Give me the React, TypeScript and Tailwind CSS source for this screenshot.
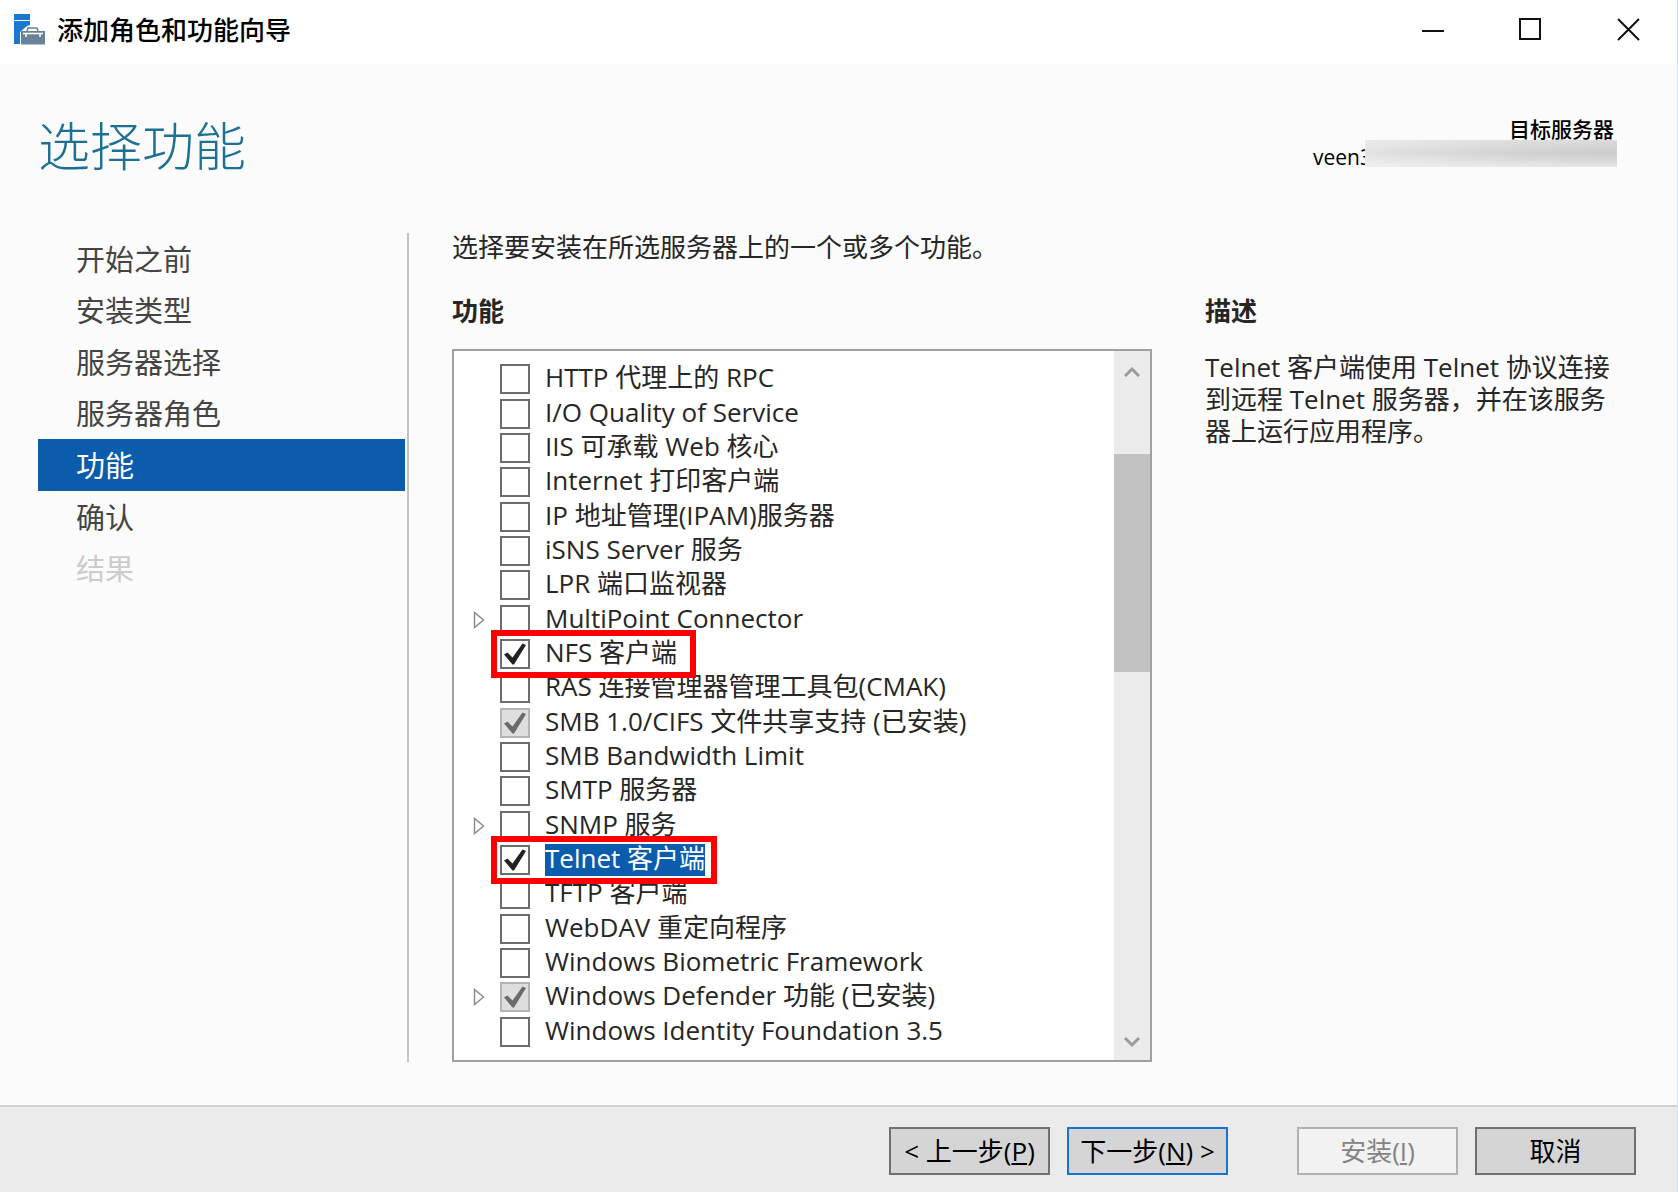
import { useState } from 'react';
import { clsx } from 'clsx';

// ── Data ──────────────────────────────────────────────────────────────────────

type Feature = {
  name: string;
  expandable?: boolean;
  installed?: boolean;
  mark?: string;
};

const STEPS: { label: string; disabled?: boolean }[] = [
  { label: '开始之前' },
  { label: '安装类型' },
  { label: '服务器选择' },
  { label: '服务器角色' },
  { label: '功能' },
  { label: '确认' },
  { label: '结果', disabled: true },
];

const FEATURES: Feature[] = [
  { name: 'HTTP 代理上的 RPC' },
  { name: 'I/O Quality of Service' },
  { name: 'IIS 可承载 Web 核心' },
  { name: 'Internet 打印客户端' },
  { name: 'IP 地址管理(IPAM)服务器' },
  { name: 'iSNS Server 服务' },
  { name: 'LPR 端口监视器' },
  { name: 'MultiPoint Connector', expandable: true },
  { name: 'NFS 客户端', mark: 'w-[205px]' },
  { name: 'RAS 连接管理器管理工具包(CMAK)' },
  { name: 'SMB 1.0/CIFS 文件共享支持 (已安装)', installed: true },
  { name: 'SMB Bandwidth Limit' },
  { name: 'SMTP 服务器' },
  { name: 'SNMP 服务', expandable: true },
  { name: 'Telnet 客户端', mark: 'w-[226px]' },
  { name: 'TFTP 客户端' },
  { name: 'WebDAV 重定向程序' },
  { name: 'Windows Biometric Framework' },
  { name: 'Windows Defender 功能 (已安装)', expandable: true, installed: true },
  { name: 'Windows Identity Foundation 3.5' },
];

// ── Main ──────────────────────────────────────────────────────────────────────

export default function App() {
  const [step, setStep]       = useState('功能');
  const [active, setActive]   = useState('Telnet 客户端');
  const [checked, setChecked] = useState<string[]>(['NFS 客户端', 'Telnet 客户端']);

  const toggle = (name: string) => {
    setActive(name);
    setChecked(list => (list.includes(name) ? list.filter(n => n !== name) : [...list, name]));
  };

  return (
    <div
      lang="zh-CN"
      className="flex min-h-screen flex-col border-r border-[#cfe2ef] bg-[#fbfbfb] font-['Open_Sans','Noto_Sans_CJK_SC',sans-serif] text-[26px] leading-8 text-[#262626]"
    >
      <TitleBar />

      {/* ── Header ── */}
      <header className="flex items-start justify-between pt-10 pr-[60px] pl-[38px]">
        <h1 className="pt-[7px] text-[52px] leading-[70px] font-light text-[#1b7093]">选择功能</h1>
        <div className="relative w-[304px] pt-[11px] text-[21px] leading-7 text-black">
          <p className="pr-[3px] text-right font-medium">目标服务器</p>
          <p>veen3</p>
          <div className="absolute top-9 right-0 h-[27px] w-[252px] bg-linear-to-r from-[#e2e2e2] via-[#d0d0d0] via-65% to-[#cccccc]">
            <div className="h-full w-full bg-linear-to-b from-white/30 via-transparent to-white/50" />
          </div>
        </div>
      </header>

      {/* ── Body ── */}
      <main className="flex flex-1 pt-[52px] pr-[59px] pb-[43px] pl-[38px]">
        <nav className="w-[371px] shrink-0 border-r-2 border-[#c3c3c3] pr-[2px]">
          <ul className="grid h-[361px] auto-rows-fr text-[29px]">
            {STEPS.map(s => (
              <li key={s.label} className="flex">
                <button
                  disabled={s.disabled}
                  onClick={() => setStep(s.label)}
                  className={clsx(
                    'w-full pt-[2px] pl-[38px] text-left',
                    s.disabled ? 'text-[#cccccc]' : step === s.label ? 'bg-[#0b5cad] text-white' : 'text-[#444444]',
                  )}
                >
                  {s.label}
                </button>
              </li>
            ))}
          </ul>
        </nav>

        <section className="flex min-w-0 flex-1 flex-col pl-[43px]">
          <p className="-mt-[2px]">选择要安装在所选服务器上的一个或多个功能。</p>
          <h2 className="mt-8 font-bold">功能</h2>
          <div className="mt-[22px] flex flex-1 border-2 border-[#a0a0a0] bg-white">
            <ul className="grid h-[687px] flex-1 auto-rows-fr self-center pl-[19px]">
              {FEATURES.map(f => (
                <FeatureRow
                  key={f.name}
                  feature={f}
                  active={active === f.name}
                  checked={!!f.installed || checked.includes(f.name)}
                  onToggle={() => toggle(f.name)}
                />
              ))}
            </ul>
            <ScrollBar />
          </div>
        </section>

        <aside className="ml-[53px] w-[413px] shrink-0 pt-[62px]">
          <h2 className="font-bold">描述</h2>
          <p className="mt-6">Telnet 客户端使用 Telnet 协议连接到远程 Telnet 服务器，并在该服务器上运行应用程序。</p>
        </aside>
      </main>

      {/* ── Footer ── */}
      <footer className="flex justify-end border-t-2 border-[#d2d2d2] bg-[#ebebeb] pt-5 pr-[41px] pb-[17px] text-black">
        <button className="h-12 w-[161px] border-2 border-[#707070] bg-[#d5d5d5]">&lt; 上一步(<u>P</u>)</button>
        <button className="ml-[17px] h-12 w-[161px] border-2 border-[#1874d2] bg-[#d5d5d5]">下一步(<u>N</u>) &gt;</button>
        <button disabled className="ml-[69px] h-12 w-[161px] border-2 border-[#adb2b5] bg-[#f2f2f2] text-[#838383]">安装(<u>I</u>)</button>
        <button className="ml-[17px] h-12 w-[161px] border-2 border-[#707070] bg-[#d5d5d5]">取消</button>
      </footer>
    </div>
  );
}

// ── Title bar ─────────────────────────────────────────────────────────────────

function TitleBar() {
  return (
    <div className="flex h-16 items-center bg-white pb-1 text-black">
      <svg viewBox="0 0 32 32" className="ml-[14px] h-8 w-8">
        <path d="M0 0h16v6H0zM0 7h16v4l-3 1-7 6v12H0z" fill="#1b78d2" />
        <path d="M13 17l1-3h9l1 3" fill="none" stroke="#67839a" strokeWidth="1.5" />
        <path d="M7 17h24v13.5H7z" fill="#67839a" />
        <path d="M9 19.5h20M12 19v4M26 19v4" fill="none" stroke="#fff" strokeWidth="1.5" />
      </svg>
      <span className="ml-[11px] flex-1 font-medium">添加角色和功能向导</span>
      <button aria-label="最小化" className="flex h-full w-[98px] items-center justify-center">
        <svg viewBox="0 0 24 24" className="h-6 w-6" fill="none" stroke="#111" strokeWidth="2">
          <path d="M2 13h22" />
        </svg>
      </button>
      <button aria-label="最大化" className="flex h-full w-[98px] items-center justify-center">
        <svg viewBox="0 0 24 24" className="h-6 w-6" fill="none" stroke="#111" strokeWidth="2">
          <path d="M2 1h20v20H2z" />
        </svg>
      </button>
      <button aria-label="关闭" className="flex h-full w-[98px] items-center justify-center">
        <svg viewBox="0 0 24 24" className="h-6 w-6" fill="none" stroke="#111" strokeWidth="2">
          <path d="M2 1l21 21M23 1L2 22" />
        </svg>
      </button>
    </div>
  );
}

// ── Feature row ───────────────────────────────────────────────────────────────

type FeatureRowProps = {
  feature: Feature;
  active: boolean;
  checked: boolean;
  onToggle: () => void;
};

function FeatureRow({ feature, active, checked, onToggle }: FeatureRowProps) {
  return (
    <li className="flex items-center">
      <div className="flex w-[27px] shrink-0">
        {feature.expandable && (
          <button aria-label={`展开 ${feature.name}`}>
            <svg viewBox="0 0 12 18" className="h-[18px] w-3" fill="#fff" stroke="#8c8c8c" strokeWidth="1.5">
              <path d="M1.5 1.5v15l9-7.5z" />
            </svg>
          </button>
        )}
      </div>
      <label className="relative flex items-center">
        <span className="grid">
          <input
            type="checkbox"
            checked={checked}
            disabled={feature.installed}
            onChange={onToggle}
            className="col-start-1 row-start-1 h-[30px] w-[30px] appearance-none border-2 border-[#6c6c6c] bg-white disabled:border-[#b4b4b4] disabled:bg-[#dedede]"
          />
          {checked && (
            <svg
              viewBox="0 0 30 30"
              className={clsx('col-start-1 row-start-1 h-[30px] w-[30px]', feature.installed ? 'fill-[#6b6b6b]' : 'fill-[#222222]')}
            >
              <path d="M4 15.5L7.5 13.5L12.5 18.5L22.5 4.5L26 6L14 25.5H12.5Z" />
            </svg>
          )}
        </span>
        <span className={clsx('ml-[15px] pb-1 leading-7 whitespace-nowrap', active && 'bg-[#0b5cad] text-white')}>
          {feature.name}
        </span>
        {feature.mark && (
          <span className={clsx('absolute -top-2 -bottom-2 -left-[9px] z-10 border-[6px] border-[#fe0000]', feature.mark)} />
        )}
      </label>
    </li>
  );
}

// ── Scroll bar ────────────────────────────────────────────────────────────────

function ScrollBar() {
  return (
    <div className="flex w-9 shrink-0 flex-col items-center bg-[#ebebeb]">
      <svg viewBox="0 0 16 12" className="mt-[15px] h-3 w-4" fill="none" stroke="#9a9a9a" strokeWidth="3">
        <path d="M1 10l7-7l7 7" />
      </svg>
      <div className="mt-[76px] h-[218px] w-full bg-[#c2c2c2]" />
      <svg viewBox="0 0 16 12" className="mt-auto mb-3 h-3 w-4" fill="none" stroke="#9a9a9a" strokeWidth="3">
        <path d="M1 2l7 7l7-7" />
      </svg>
    </div>
  );
}
